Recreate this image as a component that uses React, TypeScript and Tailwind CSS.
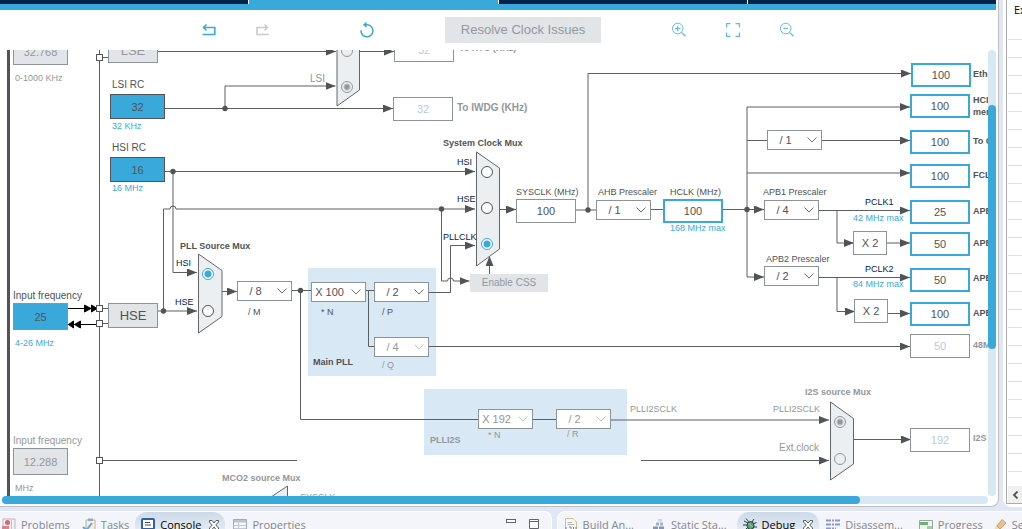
import clsx from 'clsx';
import type { ReactNode } from 'react';

type Tone = 'dark' | 'muted' | 'blue' | 'navy';

const tones: Record<Tone, string> = {
  dark: 'text-[#505357]',
  muted: 'text-[#94979b]',
  blue: 'text-[#39a9dc]',
  navy: 'text-[#03234b]',
};

interface Caption {
  text: string;
  pos: string;
  tone?: Tone;
  bold?: boolean;
  large?: boolean;
  htmlFor?: string;
}

const captions: Caption[] = [
  { text: '0-1000 KHz', pos: 'left-[15px] top-[72px]', tone: 'muted', htmlFor: 'lse-in' },
  { text: 'LSI RC', pos: 'left-[112px] top-[79px]', htmlFor: 'lsi', large: true },
  { text: '32 KHz', pos: 'left-[112px] top-[120px]', tone: 'blue' },
  { text: 'HSI RC', pos: 'left-[112px] top-[142px]', htmlFor: 'hsi', large: true },
  { text: '16 MHz', pos: 'left-[112px] top-[182px]', tone: 'blue' },
  { text: 'Input frequency', pos: 'left-[13px] top-[290px]', htmlFor: 'hse-in', large: true },
  { text: '4-26 MHz', pos: 'left-[15px] top-[337px]', tone: 'blue' },
  { text: 'Input frequency', pos: 'left-[13px] top-[435px]', tone: 'muted', htmlFor: 'i2s-in', large: true },
  { text: 'MHz', pos: 'left-[15px] top-[482px]', tone: 'muted' },
  { text: 'LSI', pos: 'left-[310px] top-[73px]', tone: 'muted', htmlFor: 'rtc-lsi', large: true },
  { text: 'To RTC (KHz)', pos: 'left-[459px] top-[42px]', tone: 'muted', bold: true, htmlFor: 'rtc' },
  { text: 'To IWDG (KHz)', pos: 'left-[457px] top-[102px]', tone: 'muted', bold: true, large: true, htmlFor: 'iwdg' },
  { text: 'System Clock Mux', pos: 'left-[443px] top-[137px]', bold: true },
  { text: 'HSI', pos: 'left-[457px] top-[156px]', tone: 'navy', htmlFor: 'sys-hsi' },
  { text: 'HSE', pos: 'left-[457px] top-[193px]', tone: 'navy', htmlFor: 'sys-hse' },
  { text: 'PLLCLK', pos: 'left-[443px] top-[231px]', tone: 'navy', htmlFor: 'sys-pll' },
  { text: 'PLL Source Mux', pos: 'left-[180px] top-[240px]', bold: true },
  { text: 'HSI', pos: 'left-[176px] top-[257px]', tone: 'navy', htmlFor: 'pll-hsi' },
  { text: 'HSE', pos: 'left-[175px] top-[296px]', tone: 'navy', htmlFor: 'pll-hse' },
  { text: '/ M', pos: 'left-[248px] top-[306px]', htmlFor: 'pll-m' },
  { text: '* N', pos: 'left-[321px] top-[306px]', htmlFor: 'pll-n' },
  { text: '/ P', pos: 'left-[382px] top-[306px]', htmlFor: 'pll-p' },
  { text: '/ Q', pos: 'left-[382px] top-[359px]', tone: 'muted', htmlFor: 'pll-q' },
  { text: 'Main PLL', pos: 'left-[313px] top-[356px]', bold: true },
  { text: 'PLLI2S', pos: 'left-[430px] top-[434px]', tone: 'muted', bold: true },
  { text: '* N', pos: 'left-[488px] top-[429px]', tone: 'muted', htmlFor: 'i2s-n' },
  { text: '/ R', pos: 'left-[567px] top-[428px]', tone: 'muted', htmlFor: 'i2s-r' },
  { text: 'PLLI2SCLK', pos: 'left-[630px] top-[403px]', tone: 'muted' },
  { text: 'PLLI2SCLK', pos: 'left-[773px] top-[403px]', tone: 'muted', htmlFor: 'i2s-pll' },
  { text: 'Ext.clock', pos: 'left-[779px] top-[442px]', tone: 'muted', htmlFor: 'i2s-ext', large: true },
  { text: 'I2S source Mux', pos: 'left-[805px] top-[386px]', tone: 'muted', bold: true },
  { text: 'MCO2 source Mux', pos: 'left-[222px] top-[472px]', tone: 'muted', bold: true },
  { text: 'SYSCLK', pos: 'left-[300px] top-[491px]', tone: 'muted' },
  { text: 'SYSCLK (MHz)', pos: 'left-[516px] top-[186px]', htmlFor: 'sysclk' },
  { text: 'AHB Prescaler', pos: 'left-[598px] top-[186px]', htmlFor: 'ahb' },
  { text: 'HCLK (MHz)', pos: 'left-[670px] top-[186px]', htmlFor: 'hclk' },
  { text: '168 MHz max', pos: 'left-[670px] top-[222px]', tone: 'blue' },
  { text: 'APB1 Prescaler', pos: 'left-[763px] top-[186px]', htmlFor: 'apb1' },
  { text: 'PCLK1', pos: 'left-[865px] top-[196px]', tone: 'navy' },
  { text: '42 MHz max', pos: 'left-[853px] top-[212px]', tone: 'blue' },
  { text: 'APB2 Prescaler', pos: 'left-[766px] top-[253px]', htmlFor: 'apb2' },
  { text: 'PCLK2', pos: 'left-[865px] top-[263px]', tone: 'navy' },
  { text: '84 MHz max', pos: 'left-[853px] top-[278px]', tone: 'blue' },
  { text: 'Ethernet PTP clock (MHz)', pos: 'left-[973px] top-[68px]', bold: true, htmlFor: 'out-eth' },
  { text: 'HCLK to AHB bus, core,', pos: 'left-[973px] top-[94px]', bold: true, htmlFor: 'out-hclk' },
  { text: 'memory and DMA (MHz)', pos: 'left-[973px] top-[106px]', bold: true, htmlFor: 'out-hclk' },
  { text: 'To Cortex System timer (MHz)', pos: 'left-[973px] top-[135px]', bold: true, htmlFor: 'out-cortex' },
  { text: 'FCLK Cortex clock (MHz)', pos: 'left-[973px] top-[169px]', bold: true, htmlFor: 'out-fclk' },
  { text: 'APB1 peripheral clocks (MHz)', pos: 'left-[973px] top-[205px]', bold: true, htmlFor: 'out-apb1' },
  { text: 'APB1 Timer clocks (MHz)', pos: 'left-[973px] top-[237px]', bold: true, htmlFor: 'out-tim1' },
  { text: 'APB2 peripheral clocks (MHz)', pos: 'left-[973px] top-[272px]', bold: true, htmlFor: 'out-apb2' },
  { text: 'APB2 timer clocks (MHz)', pos: 'left-[973px] top-[307px]', bold: true, htmlFor: 'out-tim2' },
  { text: '48MHz clocks (MHz)', pos: 'left-[973px] top-[339px]', tone: 'muted', bold: true, htmlFor: 'out-48' },
  { text: 'I2S clocks (MHz)', pos: 'left-[973px] top-[432px]', tone: 'muted', bold: true, htmlFor: 'out-i2s' },
];

type FieldKind = 'source' | 'input' | 'inputOff' | 'plain' | 'target' | 'off';

const fieldKinds: Record<FieldKind, string> = {
  source: 'h-[25px] w-[55px] border border-[#505357] bg-[#39a9dc] text-[#505357]',
  input: 'h-[27px] w-[55px] border border-[#8d9499] bg-[#39a9dc] text-[#505357]',
  inputOff: 'h-[27px] w-[55px] border border-[#8d9499] bg-[#e1e5e8] text-[#94979b]',
  plain: 'h-6 w-[60px] border border-[#8d9499] bg-white text-[#505357]',
  target: 'h-6 w-[60px] border-2 border-[#39a9dc] bg-white text-[#505357]',
  off: 'h-6 w-[60px] border border-[#8d9499] bg-white text-[#b8cbe2]',
};

const fields: { id: string; value: string; kind: FieldKind; pos: string }[] = [
  { id: 'lse-in', value: '32.768', kind: 'inputOff', pos: 'left-[13px] top-[38px]' },
  { id: 'lsi', value: '32', kind: 'source', pos: 'left-[110px] top-[94px]' },
  { id: 'hsi', value: '16', kind: 'source', pos: 'left-[110px] top-[157px]' },
  { id: 'hse-in', value: '25', kind: 'input', pos: 'left-[13px] top-[303px]' },
  { id: 'i2s-in', value: '12.288', kind: 'inputOff', pos: 'left-[13px] top-[448px]' },
  { id: 'rtc', value: '32', kind: 'off', pos: 'left-[394px] top-[38px]' },
  { id: 'iwdg', value: '32', kind: 'off', pos: 'left-[393px] top-[97px]' },
  { id: 'sysclk', value: '100', kind: 'plain', pos: 'left-[516px] top-[199px]' },
  { id: 'hclk', value: '100', kind: 'target', pos: 'left-[663px] top-[199px]' },
  { id: 'out-eth', value: '100', kind: 'target', pos: 'left-[911px] top-[63px]' },
  { id: 'out-hclk', value: '100', kind: 'target', pos: 'left-[910px] top-[94px]' },
  { id: 'out-cortex', value: '100', kind: 'target', pos: 'left-[910px] top-[130px]' },
  { id: 'out-fclk', value: '100', kind: 'target', pos: 'left-[910px] top-[164px]' },
  { id: 'out-apb1', value: '25', kind: 'target', pos: 'left-[910px] top-[200px]' },
  { id: 'out-tim1', value: '50', kind: 'target', pos: 'left-[910px] top-[232px]' },
  { id: 'out-apb2', value: '50', kind: 'target', pos: 'left-[910px] top-[268px]' },
  { id: 'out-tim2', value: '100', kind: 'target', pos: 'left-[910px] top-[302px]' },
  { id: 'out-48', value: '50', kind: 'off', pos: 'left-[910px] top-[334px]' },
  { id: 'out-i2s', value: '192', kind: 'off', pos: 'left-[910px] top-[428px]' },
];

const dividers: { id: string; value: string; pos: string; off?: boolean; label?: string }[] = [
  { id: 'cortex', value: '/ 1', pos: 'left-[767px] top-[130px]', label: 'Cortex Prescaler' },
  { id: 'ahb', value: '/ 1', pos: 'left-[596px] top-[200px]' },
  { id: 'apb1', value: '/ 4', pos: 'left-[764px] top-[200px]' },
  { id: 'apb2', value: '/ 2', pos: 'left-[764px] top-[266px]' },
  { id: 'pll-m', value: '/ 8', pos: 'left-[237px] top-[281px]' },
  { id: 'pll-n', value: 'X 100', pos: 'left-[311px] top-[282px]' },
  { id: 'pll-p', value: '/ 2', pos: 'left-[374px] top-[282px]' },
  { id: 'pll-q', value: '/ 4', pos: 'left-[374px] top-[337px]', off: true },
  { id: 'i2s-n', value: 'X 192', pos: 'left-[478px] top-[409px]', off: true },
  { id: 'i2s-r', value: '/ 2', pos: 'left-[556px] top-[409px]', off: true },
];

const radios: { id: string; group: string; pos: string; checked?: boolean; off?: boolean; label?: string }[] = [
  { id: 'rtc-lse', group: 'rtc-mux', pos: 'left-[341px] top-[45px]', off: true, label: 'LSE' },
  { id: 'rtc-lsi', group: 'rtc-mux', pos: 'left-[341px] top-[81px]', off: true, checked: true },
  { id: 'sys-hsi', group: 'sys-mux', pos: 'left-[481px] top-[166px]' },
  { id: 'sys-hse', group: 'sys-mux', pos: 'left-[481px] top-[202px]' },
  { id: 'sys-pll', group: 'sys-mux', pos: 'left-[481px] top-[238px]', checked: true },
  { id: 'pll-hsi', group: 'pll-mux', pos: 'left-[202px] top-[268px]', checked: true },
  { id: 'pll-hse', group: 'pll-mux', pos: 'left-[202px] top-[305px]' },
  { id: 'i2s-pll', group: 'i2s-mux', pos: 'left-[834px] top-[416px]', off: true, checked: true },
  { id: 'i2s-ext', group: 'i2s-mux', pos: 'left-[834px] top-[453px]', off: true },
];

// wires that end in an arrow head
const arrows = [
  'M158 51.5H336',
  'M360 51.5H394',
  'M165 108.5H393',
  'M225 108V86H335.500',
  'M165 171.5H475',
  'M173 171V206M173 206V272.5H197',
  'M158 311H197',
  'M163.500 311V209H170A3 3 0 0 1 176 209H475',
  'M441.500 209V281H447.500A3 3 0 0 1 453.500 281H469.500',
  'M429 292.500H450.500V245.500H475',
  'M489.500 274V256',
  'M222 291.500H237',
  'M499 209.500H516',
  'M588 210V73.500H911',
  'M747 209V107H910',
  'M822 140.500H910',
  'M747 173H910',
  'M723 209.500H764',
  'M747 209V277H764',
  'M819 210.500H910',
  'M837 210V243H854',
  'M887 243H910',
  'M819 277.500H910',
  'M837 277V311.500H855',
  'M888 313.500H910',
  'M429 346.500H910',
  'M611 420H829',
  'M641 460.500H829',
  'M853 439.500H911',
];

const lines = [
  'M99.500 45V500',
  'M99 57.500H108M99 308.500H108M99 323.500H108',
  'M292 290.500H311',
  'M366 290.500H374',
  'M368.500 290V346.500H374',
  'M300.500 290V419.500H478',
  'M533 419.500H556',
  'M576 210H596',
  'M651 209.500H663',
  'M747 140.500H767',
  'M102 460.500H297',
];

const dots = [
  [225, 108.5],
  [173, 171.5],
  [163.5, 311],
  [441.5, 209],
  [300.5, 290.5],
  [588, 210],
  [747, 209.5],
];

const muxes = [
  '337,30 359.500,45 359.500,90 337,106',
  '476.500,152 499.500,168 499.500,249 476.500,266',
  '198.500,254 222,270.500 222,316.500 198.500,333',
  '830.500,402 853.500,418.500 853.500,464 830.500,480',
  '287.500,486 287.500,510 262,510 262,503',
];

function Wiring() {
  return (
    <svg className="absolute inset-0 h-full w-full" aria-hidden="true">
      <defs>
        <marker id="head" markerUnits="userSpaceOnUse" markerWidth="10" markerHeight="8" refX="10" refY="4" orient="auto">
          <path d="M0 0L10 4L0 8Z" fill="#505357" />
        </marker>
      </defs>
      <path d="M8.500 45V500" stroke="#505357" strokeWidth="3" />
      <g fill="none" stroke="#5c5f62">
        {lines.map((d) => <path key={d} d={d} />)}
        {arrows.map((d) => <path key={d} d={d} markerEnd="url(#head)" />)}
      </g>
      {dots.map(([x, y]) => <circle key={x} cx={x} cy={y} r="2.700" fill="#505357" />)}
      <g fill="#ebeff2" stroke="#62676b">
        {muxes.map((points) => <polygon key={points} points={points} />)}
      </g>
      <g fill="#000" stroke="#000">
        <path d="M68 308.500H96M68 324.500H96" />
        <path d="M84.500 305L91 308.500L84.500 312ZM91.500 305L97 308.500L91.500 312Z" />
        <path d="M80.500 321L74.500 324.500L80.500 328ZM73.500 321L68.500 324.500L73.500 328Z" />
      </g>
      <g fill="#fff" stroke="#505357">
        {[54.5, 305.5, 320.5, 457.5].map((y) => <rect key={y} x="96.500" y={y} width="6" height="6" />)}
      </g>
    </svg>
  );
}

function ClockDiagram() {
  return (
    <div className="relative -mt-[50px] h-[546px]">
      <div className="absolute left-[308px] top-[268px] h-[108px] w-[128px] bg-[#d9e8f5]" />
      <div className="absolute left-[424px] top-[389px] h-[66px] w-[203px] bg-[#d9e8f5]" />
      <Wiring />

      <div className="absolute left-[108px] top-[38px] flex h-[25px] w-[50px] items-center justify-center border border-[#8d9499] bg-[#e1e5e8] text-[13px] text-[#94979b]">
        LSE
      </div>
      <div className="absolute left-[108px] top-[303px] flex h-[25px] w-[50px] items-center justify-center border border-[#8d9499] bg-[#e1e5e8] text-[13px] text-[#505357]">
        HSE
      </div>
      <div className="absolute left-[853px] top-[231px] flex h-6 w-[34px] items-center justify-center border border-[#8d9499] bg-white text-[11px] text-[#505357]">
        X 2
      </div>
      <div className="absolute left-[854px] top-[299px] flex h-6 w-[34px] items-center justify-center border border-[#8d9499] bg-white text-[11px] text-[#505357]">
        X 2
      </div>
      <button type="button" className="absolute left-[470px] top-[274px] h-[18px] w-[78px] bg-[#e1e5e8] text-[10px] leading-4 text-[#94979b]">
        Enable CSS
      </button>

      {fields.map(({ id, value, kind, pos }) => (
        <input
          key={id}
          id={id}
          defaultValue={value}
          className={clsx('absolute text-center text-[11px] outline-none', fieldKinds[kind], pos)}
        />
      ))}

      {dividers.map(({ id, value, pos, off, label }) => (
        <div key={id} className={clsx('absolute h-5 w-[55px]', pos)}>
          <select
            id={id}
            aria-label={label}
            className={clsx(
              'block h-full w-full appearance-none border border-[#8d9499] bg-white pr-[18px] text-center text-[11px] outline-none',
              off ? 'text-[#94979b]' : 'text-[#505357]'
            )}
          >
            <option>{value}</option>
          </select>
          <svg
            viewBox="0 0 10 6"
            className={clsx('pointer-events-none absolute right-[5px] top-[7px] h-[6px] w-[10px]', off ? 'text-[#c4c7ca]' : 'text-[#6d7073]')}
            aria-hidden="true"
          >
            <path d="M0.500 0.500L5 5L9.500 0.500" fill="none" stroke="currentColor" />
          </svg>
        </div>
      ))}

      {radios.map(({ id, group, pos, checked, off, label }) => (
        <input
          key={id}
          id={id}
          type="radio"
          name={group}
          aria-label={label}
          defaultChecked={checked}
          className={clsx(
            'absolute size-3 appearance-none rounded-full border',
            off
              ? 'border-[#94979b] checked:bg-[radial-gradient(circle,#94979b_2px,#ebeff2_4px)]'
              : 'border-[#505357] bg-white checked:border-[#39a9dc] checked:bg-[radial-gradient(circle,#39a9dc_3px,#ffffff_4px)]',
            pos
          )}
        />
      ))}

      {captions.map(({ text, pos, tone = 'dark', bold, large, htmlFor }, i) => {
        const className = clsx(
          'absolute whitespace-nowrap leading-3',
          large ? 'text-[10px]' : 'text-[9px]',
          bold && 'font-bold',
          tones[tone],
          pos
        );
        return htmlFor ? (
          <label key={i} htmlFor={htmlFor} className={className}>{text}</label>
        ) : (
          <span key={i} className={className}>{text}</span>
        );
      })}
    </div>
  );
}

function ToolButton({ label, children, className }: { label: string; children: ReactNode; className?: string }) {
  return (
    <button type="button" aria-label={label} className={clsx('size-[14px]', className)}>
      <svg viewBox="0 0 14 14" className="size-[14px] overflow-visible" fill="none" stroke="currentColor">
        {children}
      </svg>
    </button>
  );
}

function Toolbar() {
  return (
    <div className="flex h-10 shrink-0 items-center justify-center gap-[71px]">
      <div className="flex items-center gap-[90px]">
        <div className="flex items-center gap-10">
          <ToolButton label="Undo" className="text-[#39a9dc]">
            <path d="M4.500 1.500L1.500 4.500L4.500 7.500M1.500 4.500H12.800V11.500H0.500" strokeWidth="1.600" />
          </ToolButton>
          <ToolButton label="Redo" className="text-[#c9cccf]">
            <path d="M8.500 1.500L11.500 4.500L8.500 7.500M11.500 4.500H1V11.500H13" strokeWidth="1.600" />
          </ToolButton>
        </div>
        <ToolButton label="Reset" className="text-[#39a9dc]">
          <path d="M4.500 1.800H7.500A6 6 0 1 1 1 7.300M6.500 -0.500L4 1.800L6.500 4" strokeWidth="1.500" />
        </ToolButton>
      </div>
      <button type="button" className="h-[26px] w-[156px] bg-[#e1e5e8] text-[13px] text-[#94979b]">
        Resolve Clock Issues
      </button>
      <div className="flex items-center gap-10 text-[#62bae3]">
        <ToolButton label="Zoom in">
          <circle cx="5.700" cy="5.500" r="5.300" />
          <path d="M9.500 9.500L13.500 13.200M3 5.500H8.400M5.700 2.800V8.200" strokeWidth="1.200" />
        </ToolButton>
        <ToolButton label="Fit to window">
          <path d="M0.600 4.500V0.600H4.500M9.500 0.600H13.400V4.500M13.400 9.500V13.400H9.500M4.500 13.400H0.600V9.500" strokeWidth="1.200" />
        </ToolButton>
        <ToolButton label="Zoom out">
          <circle cx="5.700" cy="5.500" r="5.300" />
          <path d="M9.500 9.500L13.500 13.200M3.500 5.500H8" strokeWidth="1.200" />
        </ToolButton>
      </div>
    </div>
  );
}

function ViewTab({ icon, children, active, className }: { icon: ReactNode; children: ReactNode; active?: boolean; className?: string }) {
  return (
    <div
      className={clsx(
        'flex h-[26px] shrink-0 items-center gap-[5px] whitespace-nowrap',
        active ? 'rounded-t-xl bg-linear-to-b from-[#ccdae8] to-[#eef3f9] px-[6px] text-black' : 'text-[#84878d]',
        className
      )}
    >
      <svg viewBox="0 0 14 14" className="size-[14px] shrink-0" aria-hidden="true">{icon}</svg>
      <button type="button">{children}</button>
      {active && (
        <button type="button" aria-label="Close" className="ml-[3px]">
          <svg viewBox="0 0 10 10" className="block size-[10px]" fill="#fff" stroke="#55585c">
            <path d="M0.500 0.500H3L5 3L7 0.500H9.500V2L6.800 5L9.500 8V9.500H7L5 7L3 9.500H0.500V8L3.200 5L0.500 2Z" />
          </svg>
        </button>
      )}
    </div>
  );
}

const icons = {
  problems: (
    <>
      <path d="M1 1H13V13H1Z" fill="#f3f1f6" stroke="#b9b7cb" />
      <circle cx="5.500" cy="4.500" r="2.500" fill="#e0616b" />
      <path d="M0 8H7V14H0Z" fill="#d9848f" />
      <path d="M9.500 2V12" stroke="#b9c7d8" />
    </>
  ),
  tasks: (
    <>
      <path d="M4 2H13V13H4Z" fill="#f2efe6" stroke="#c3b183" />
      <path d="M6 0.500H11V3H6Z" fill="#9aa8c8" />
      <path d="M1 9L4.500 12L10 5" fill="none" stroke="#68a5d8" strokeWidth="2" />
    </>
  ),
  console: (
    <>
      <rect x="1" y="1" width="12" height="10" rx="1" fill="#fff" stroke="#34609f" strokeWidth="2" />
      <path d="M4 4.500H9M4 7H10" stroke="#3c4a63" />
    </>
  ),
  properties: (
    <>
      <path d="M0.500 1.500H13.500V13.500H0.500Z" fill="#f6f8fb" stroke="#a4abb8" />
      <path d="M1 2H13V4.500H1Z" fill="#b7c3d9" />
      <path d="M1 7.500H13M1 10.500H13M5.500 2V13" stroke="#c3c9d4" />
    </>
  ),
  build: (
    <>
      <path d="M1.500 0.500H9L12.500 4V13H1.500Z" fill="#fbf8ee" stroke="#cfbf95" />
      <path d="M3.500 4.500H8M3.500 6.500H10" stroke="#a9b4cc" />
      <path d="M2 9V14M5 9H7V14M9.500 9V14M12 9V14" stroke="#6f7ea0" fill="none" />
    </>
  ),
  stack: (
    <>
      <path d="M6 1H10V3.500H6Z" fill="#cdd5e3" />
      <path d="M4 4.500H7V7.500H4ZM8 4.500H11V7.500H8Z" fill="#a3afc8" />
      <path d="M1 8.500H6V11.500H1ZM7 8.500H12V11.500H7Z" fill="#8794b3" />
    </>
  ),
  bug: (
    <>
      <path d="M1 3L5 5M3 0.500L6 4M0 7H4M2 12L5 9M9 4L11 1M10 6L13.500 4.500M10 9H14M9 11L11 13.500" stroke="#233f3b" />
      <ellipse cx="7.500" cy="7.500" rx="3.500" ry="4" fill="#5f9d7d" stroke="#1f4038" />
      <path d="M5.500 5L9.500 9" stroke="#a8d5a0" />
    </>
  ),
  disassembly: <path d="M0 2.500H14M0 6.500H14M0 10.500H10" stroke="#8f96c8" strokeWidth="2" strokeDasharray="5 1 2 1" />,
  progress: (
    <>
      <path d="M0.500 2.500H13.500V11.500H0.500Z" fill="#eef6ee" stroke="#9aa7a0" />
      <path d="M1 4H9V7H1Z" fill="#6fb077" />
      <path d="M8 8H13V11H8Z" fill="#9fcfa3" />
    </>
  ),
  search: (
    <>
      <path d="M1 12L4 5L9 10Z" fill="#f1dfae" />
      <path d="M4 8L9 1.500L13 5L7 11Z" fill="#e8c08e" stroke="#c9a272" />
    </>
  ),
};

export default function App() {
  return (
    <div className="flex h-screen flex-col gap-1 overflow-hidden bg-[#e1e6f6] font-['Liberation_Sans',Arial,sans-serif]">
      <div className="flex min-h-0 flex-1 gap-1">
        <main className="flex min-w-0 flex-1 flex-col rounded-br-lg border-b border-r border-[#bcbfc6] bg-white pb-[2px] pr-[2px]">
          <nav className="grid h-[10px] shrink-0 grid-cols-4 gap-px border-b-[6px] border-[#39a9dc]">
            <button type="button" aria-label="Pinout &amp; Configuration" className="bg-[#03234b]" />
            <button type="button" aria-label="Clock Configuration" className="bg-[#39a9dc]" />
            <button type="button" aria-label="Project Manager" className="bg-[#03234b]" />
            <button type="button" aria-label="Tools" className="bg-[#03234b]" />
          </nav>
          <Toolbar />
          <div className="flex min-h-0 flex-1">
            <div className="min-w-0 flex-1 overflow-hidden">
              <ClockDiagram />
            </div>
            <div className="w-2 shrink-0 rounded-full bg-[#d9e8f5] pt-[55px]">
              <div className="h-[244px] rounded-full bg-[#39a9dc]" />
            </div>
          </div>
          <div className="ml-[2px] mr-2 h-2 shrink-0 rounded-full bg-[#d9e8f5]">
            <div className="h-full w-[87%] rounded-full bg-[#39a9dc]" />
          </div>
        </main>

        <aside className="flex w-[19px] shrink-0 overflow-hidden rounded-bl-lg bg-white pb-[3px] pl-[3px]">
          <div className="flex flex-1 flex-col overflow-hidden border-b border-l border-[#a9abb0] font-['Open_Sans',sans-serif] text-[11px] text-black">
            <div className="h-[22px] shrink-0 whitespace-nowrap pl-[7px] leading-5">Expression</div>
            <ul className="flex-1 overflow-hidden pl-px">
              {Array.from({ length: 25 }, (_, i) => (
                <li key={i} className="h-[18px] border-b border-[#dfdfdf]" />
              ))}
            </ul>
            <button type="button" aria-label="Scroll left" className="ml-px flex h-[17px] shrink-0 items-center bg-[#f0f0f0] pl-1">
              <svg viewBox="0 0 7 8" className="h-2 w-[7px]" fill="none" stroke="#505050" strokeWidth="1.800">
                <path d="M5.500 0.500L2 4L5.500 7.500" />
              </svg>
            </button>
          </div>
        </aside>
      </div>

      <footer className="flex h-[18px] shrink-0 gap-[5px] overflow-hidden font-['Open_Sans',sans-serif] text-[11px]">
        <section className="flex h-7 min-w-0 grow-[554] basis-0 gap-3 rounded-tr-lg border-r border-t border-white bg-[#f4f5fb] pl-[2px]">
          <ViewTab icon={icons.problems}>Problems</ViewTab>
          <ViewTab icon={icons.tasks}>Tasks</ViewTab>
          <div className="-mx-[6px] flex gap-2">
            <ViewTab icon={icons.console} active>Console</ViewTab>
            <ViewTab icon={icons.properties}>Properties</ViewTab>
          </div>
          <div className="ml-auto mr-[12px] flex items-start gap-[13px] pt-[7px]">
            <button type="button" aria-label="Minimize" className="h-1 w-[10px] border border-[#606368] bg-white" />
            <button type="button" aria-label="Maximize">
              <svg viewBox="0 0 10 10" className="block size-[10px]" fill="#fff" stroke="#606368">
                <path d="M0.500 0.500H9.500V9.500H0.500ZM0.500 2.500H9.500" />
              </svg>
            </button>
          </div>
        </section>
        <section className="flex h-7 min-w-0 grow-[463] basis-0 gap-[18px] overflow-hidden rounded-tl-lg border-l border-t border-white bg-[#f4f5fb] pl-[6px]">
          <ViewTab icon={icons.build}>Build An...</ViewTab>
          <ViewTab icon={icons.stack}>Static Sta...</ViewTab>
          <div className="-mx-2 flex gap-[7px]">
            <ViewTab icon={icons.bug} active>Debug</ViewTab>
            <ViewTab icon={icons.disassembly}>Disassem...</ViewTab>
          </div>
          <ViewTab icon={icons.progress} className="pl-[6px]">Progress</ViewTab>
          <ViewTab icon={icons.search} className="-ml-2">Search</ViewTab>
        </section>
      </footer>
    </div>
  );
}
